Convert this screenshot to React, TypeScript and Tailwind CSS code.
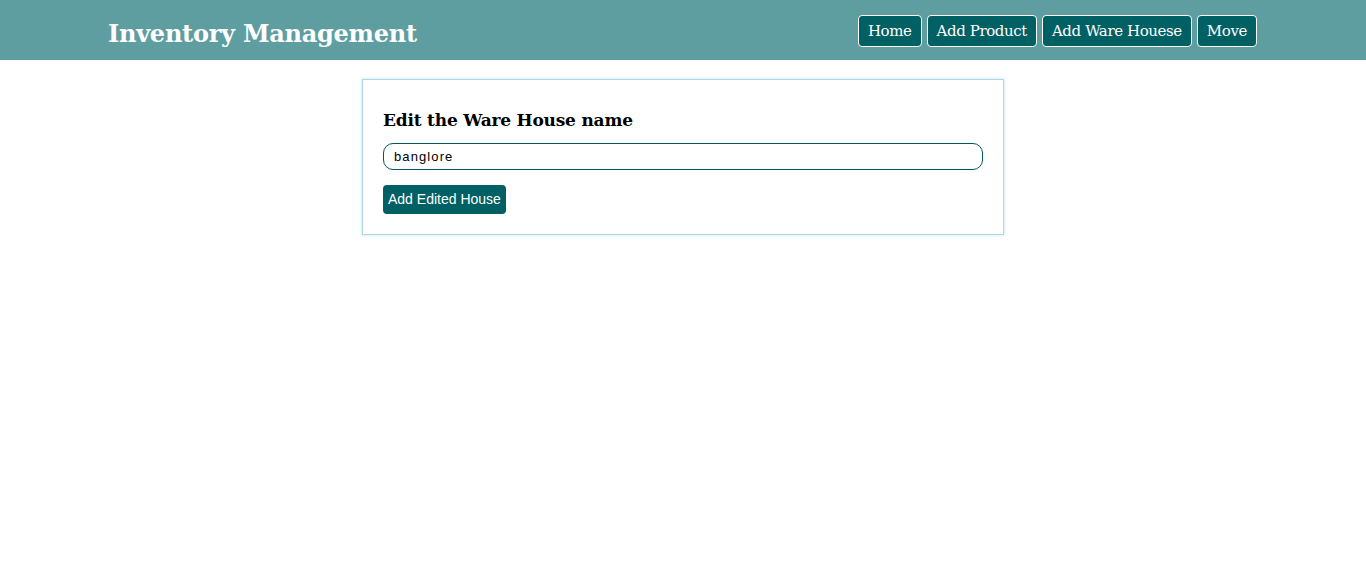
import React from 'react';

const navItems = ['Home', 'Add Product', 'Add Ware Houese', 'Move'];

const App: React.FC = () => {
    return (
        <div className="min-h-screen bg-white">
            {/* header */}
            <header className="h-[60px] bg-[#5f9ea0] flex items-center justify-between pl-[108px] pr-[109px]">
                <h1 className="text-[24px] font-bold text-white tracking-[-0.25px] pt-[7px]" style={{ fontFamily: '"DejaVu Serif", Georgia, serif' }}>
                    Inventory Management
                </h1>
                <nav className="flex gap-[5px] pt-[1px]">
                    {navItems.map((item) => (
                        <button
                            key={item}
                            className="h-[32px] px-[9px] pt-[2px] bg-[#006064] text-white text-[15px] tracking-[-0.4px] border border-white rounded-[4px]"
                            style={{ fontFamily: '"DejaVu Serif", Georgia, serif' }}
                        >
                            {item}
                        </button>
                    ))}
                </nav>
            </header>

            {/* edit card */}
            <div className="flex justify-center pt-[19px]">
                <div className="w-[642px] border border-[#add8e6] shadow-[0_0_3px_rgba(135,206,235,0.6)] px-[20px] pt-[28px] pb-[20px]">
                    <h2 className="text-[17px] font-bold text-black tracking-[-0.2px] mb-[9px]" style={{ fontFamily: '"DejaVu Serif", Georgia, serif' }}>
                        Edit the Ware House name
                    </h2>
                    <input
                        defaultValue="banglore"
                        className="w-full h-[27px] border border-[#00595e] rounded-[10px] px-[10px] text-[13px] tracking-[1.1px] text-black outline-none"
                        style={{ fontFamily: '"Liberation Sans", Arial, sans-serif' }}
                    />
                    <button
                        className="mt-[15px] h-[29px] px-[5px] bg-[#006064] text-white text-[14px] rounded-[4px]"
                        style={{ fontFamily: '"Liberation Sans", Arial, sans-serif' }}
                    >
                        Add Edited House
                    </button>
                </div>
            </div>
        </div>
    );
};

export default App;
